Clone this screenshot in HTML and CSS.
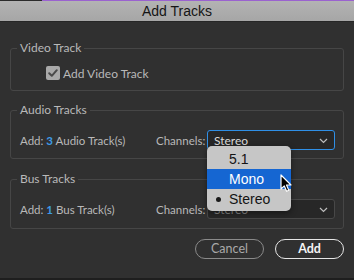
FILE: index.html
```html
<!DOCTYPE html>
<html>
<head>
<meta charset="utf-8">
<link rel="stylesheet" href="styles.css">
</head>
<body>
<div class="window">
  <div class="topstrip"><span class="purple"></span></div>
  <div class="titlebar">Add Tracks</div>
  <div class="content">
    <fieldset class="group video">
      <legend>Video Track</legend>
      <div class="row check-row">
        <span class="checkbox">
          <svg width="14" height="14" viewBox="0 0 14 14"><path d="M3.2 7.2 L5.8 9.8 L10.8 4.2" fill="none" stroke="#4a4a4a" stroke-width="2" stroke-linecap="round" stroke-linejoin="round"/></svg>
        </span>
        <span class="label">Add Video Track</span>
      </div>
    </fieldset>

    <fieldset class="group audio">
      <legend>Audio Tracks</legend>
      <div class="row track-row">
        <span class="label">Add: <span class="num">3</span> Audio Track(s)</span>
        <span class="label">Channels:</span>
        <span class="select active"><span>Stereo</span>
          <svg class="chev" width="9" height="6" viewBox="0 0 9 6"><path d="M1 1 L4.5 4.5 L8 1" fill="none" stroke="#bdbdbd" stroke-width="1.2"/></svg>
        </span>
      </div>
    </fieldset>

    <fieldset class="group bus">
      <legend>Bus Tracks</legend>
      <div class="row track-row">
        <span class="label">Add: <span class="num">1</span> Bus Track(s)</span>
        <span class="label">Channels:</span>
        <span class="select"><span class="hidden-val">Stereo</span>
          <svg class="chev" width="9" height="6" viewBox="0 0 9 6"><path d="M1 1 L4.5 4.5 L8 1" fill="none" stroke="#bdbdbd" stroke-width="1.2"/></svg>
        </span>
      </div>
    </fieldset>

    <div class="buttons">
      <button class="btn cancel">Cancel</button>
      <button class="btn add">Add</button>
    </div>
  </div>
  <div class="bottomline"></div>

  <div class="menu">
    <div class="item">5.1</div>
    <div class="item selected">Mono</div>
    <div class="item checked"><span class="dot"></span>Stereo</div>
  </div>
  <svg class="cursor" width="13" height="19" viewBox="0 0 13 19">
    <path d="M1 1 L1 15 L4.3 11.9 L6.6 17.3 L8.8 16.3 L6.5 11 L11 11 Z" fill="#000" stroke="#fff" stroke-width="1.2" stroke-linejoin="round"/>
  </svg>
</div>
</body>
</html>
```

FILE: styles.css
```css
* { box-sizing: border-box; }
html, body {
  margin: 0;
  padding: 0;
  width: 354px;
  height: 280px;
  overflow: hidden;
  background: #303030;
}
.window {
  position: relative;
  width: 354px;
  height: 280px;
  display: flex;
  flex-direction: column;
  background: #303030;
  font-family: "Lato", "Open Sans", sans-serif;
  font-size: 11.5px;
  color: #b9b9b9;
}
.topstrip {
  height: 1px;
  background: #2b2b2b;
  display: flex;
  justify-content: flex-end;
}
.purple {
  width: 312px;
  height: 1px;
  background: #9a62cf;
}
.titlebar {
  height: 21px;
  background: linear-gradient(#b3b3b3, #a6a6a6);
  border-bottom: 1px solid #262626;
  text-align: center;
  font-family: "Liberation Sans", Arial, sans-serif;
  font-size: 14px;
  line-height: 21px;
  color: #151515;
}
.content {
  flex: 1;
  padding: 0 10px;
  display: flex;
  flex-direction: column;
}
.group {
  margin: 0;
  border: 1px solid #464646;
  border-radius: 3px;
  padding: 0 6px;
  min-width: 0;
}
.group legend {
  padding: 0 3px;
  margin-left: 0;
  line-height: 16px;
  font-size: 12px;
  color: #b9b9b9;
}
.video { margin-top: 18px; padding-bottom: 7px; }
.audio { margin-top: 11px; padding-bottom: 8px; }
.bus { margin-top: 12px; padding-bottom: 9px; }
.row {
  display: flex;
  align-items: center;
  height: 20px;
}
.check-row {
  margin-top: 7px;
  padding-left: 29px;
  gap: 3px;
  font-size: 12px;
}
.checkbox {
  width: 14px;
  height: 14px;
  border-radius: 2px;
  background: #a9a9a9;
  display: flex;
}
.label { white-space: nowrap; }
.num { color: #3d9be6; font-weight: bold; }
.track-row {
  margin-top: 12px;
  padding-left: 3px;
  display: grid;
  grid-template-columns: 133px 48px 128px;
  column-gap: 3px;
  align-items: center;
}
.select {
  height: 20px;
  border: 1px solid #484848;
  border-radius: 3px;
  background: #272727;
  display: flex;
  align-items: center;
  justify-content: space-between;
  padding: 0 6px 0 6px;
  color: #dcdcdc;
  font-size: 12px;
}
.select.active { border-color: #2f8fe6; }
.hidden-val { color: #8a8a8a; }
.chev { margin-top: 1px; }
.buttons {
  margin-top: 10px;
  display: flex;
  justify-content: flex-end;
  gap: 11px;
}
.btn {
  height: 20px;
  width: 69px;
  border-radius: 10px;
  background: transparent;
  font-family: "Lato", "Open Sans", sans-serif;
  font-size: 12.5px;
  padding: 0;
  line-height: 16px;
}
.cancel { border: 1.5px solid #8a8a8a; color: #a9a9a9; }
.add { border: 1.5px solid #e6e6e6; color: #f4f4f4; font-weight: bold; }
.bottomline {
  height: 2px;
  background: #1e1e1e;
}
.menu {
  position: absolute;
  left: 207px;
  top: 146px;
  width: 84px;
  height: 65px;
  background: #c6c6c6;
  border-radius: 5px;
  box-shadow: 0 2px 6px rgba(0,0,0,0.45);
  padding-top: 3px;
  font-family: "Liberation Sans", Arial, sans-serif;
  font-size: 14px;
  color: #141414;
}
.item {
  position: relative;
  height: 20px;
  line-height: 20px;
  padding-left: 22px;
}
.item.selected {
  background: #1566d2;
  color: #ffffff;
}
.dot {
  position: absolute;
  left: 9px;
  top: 8px;
  width: 5px;
  height: 5px;
  border-radius: 50%;
  background: #1a1a1a;
}
.cursor {
  position: absolute;
  left: 280px;
  top: 174px;
}
```
